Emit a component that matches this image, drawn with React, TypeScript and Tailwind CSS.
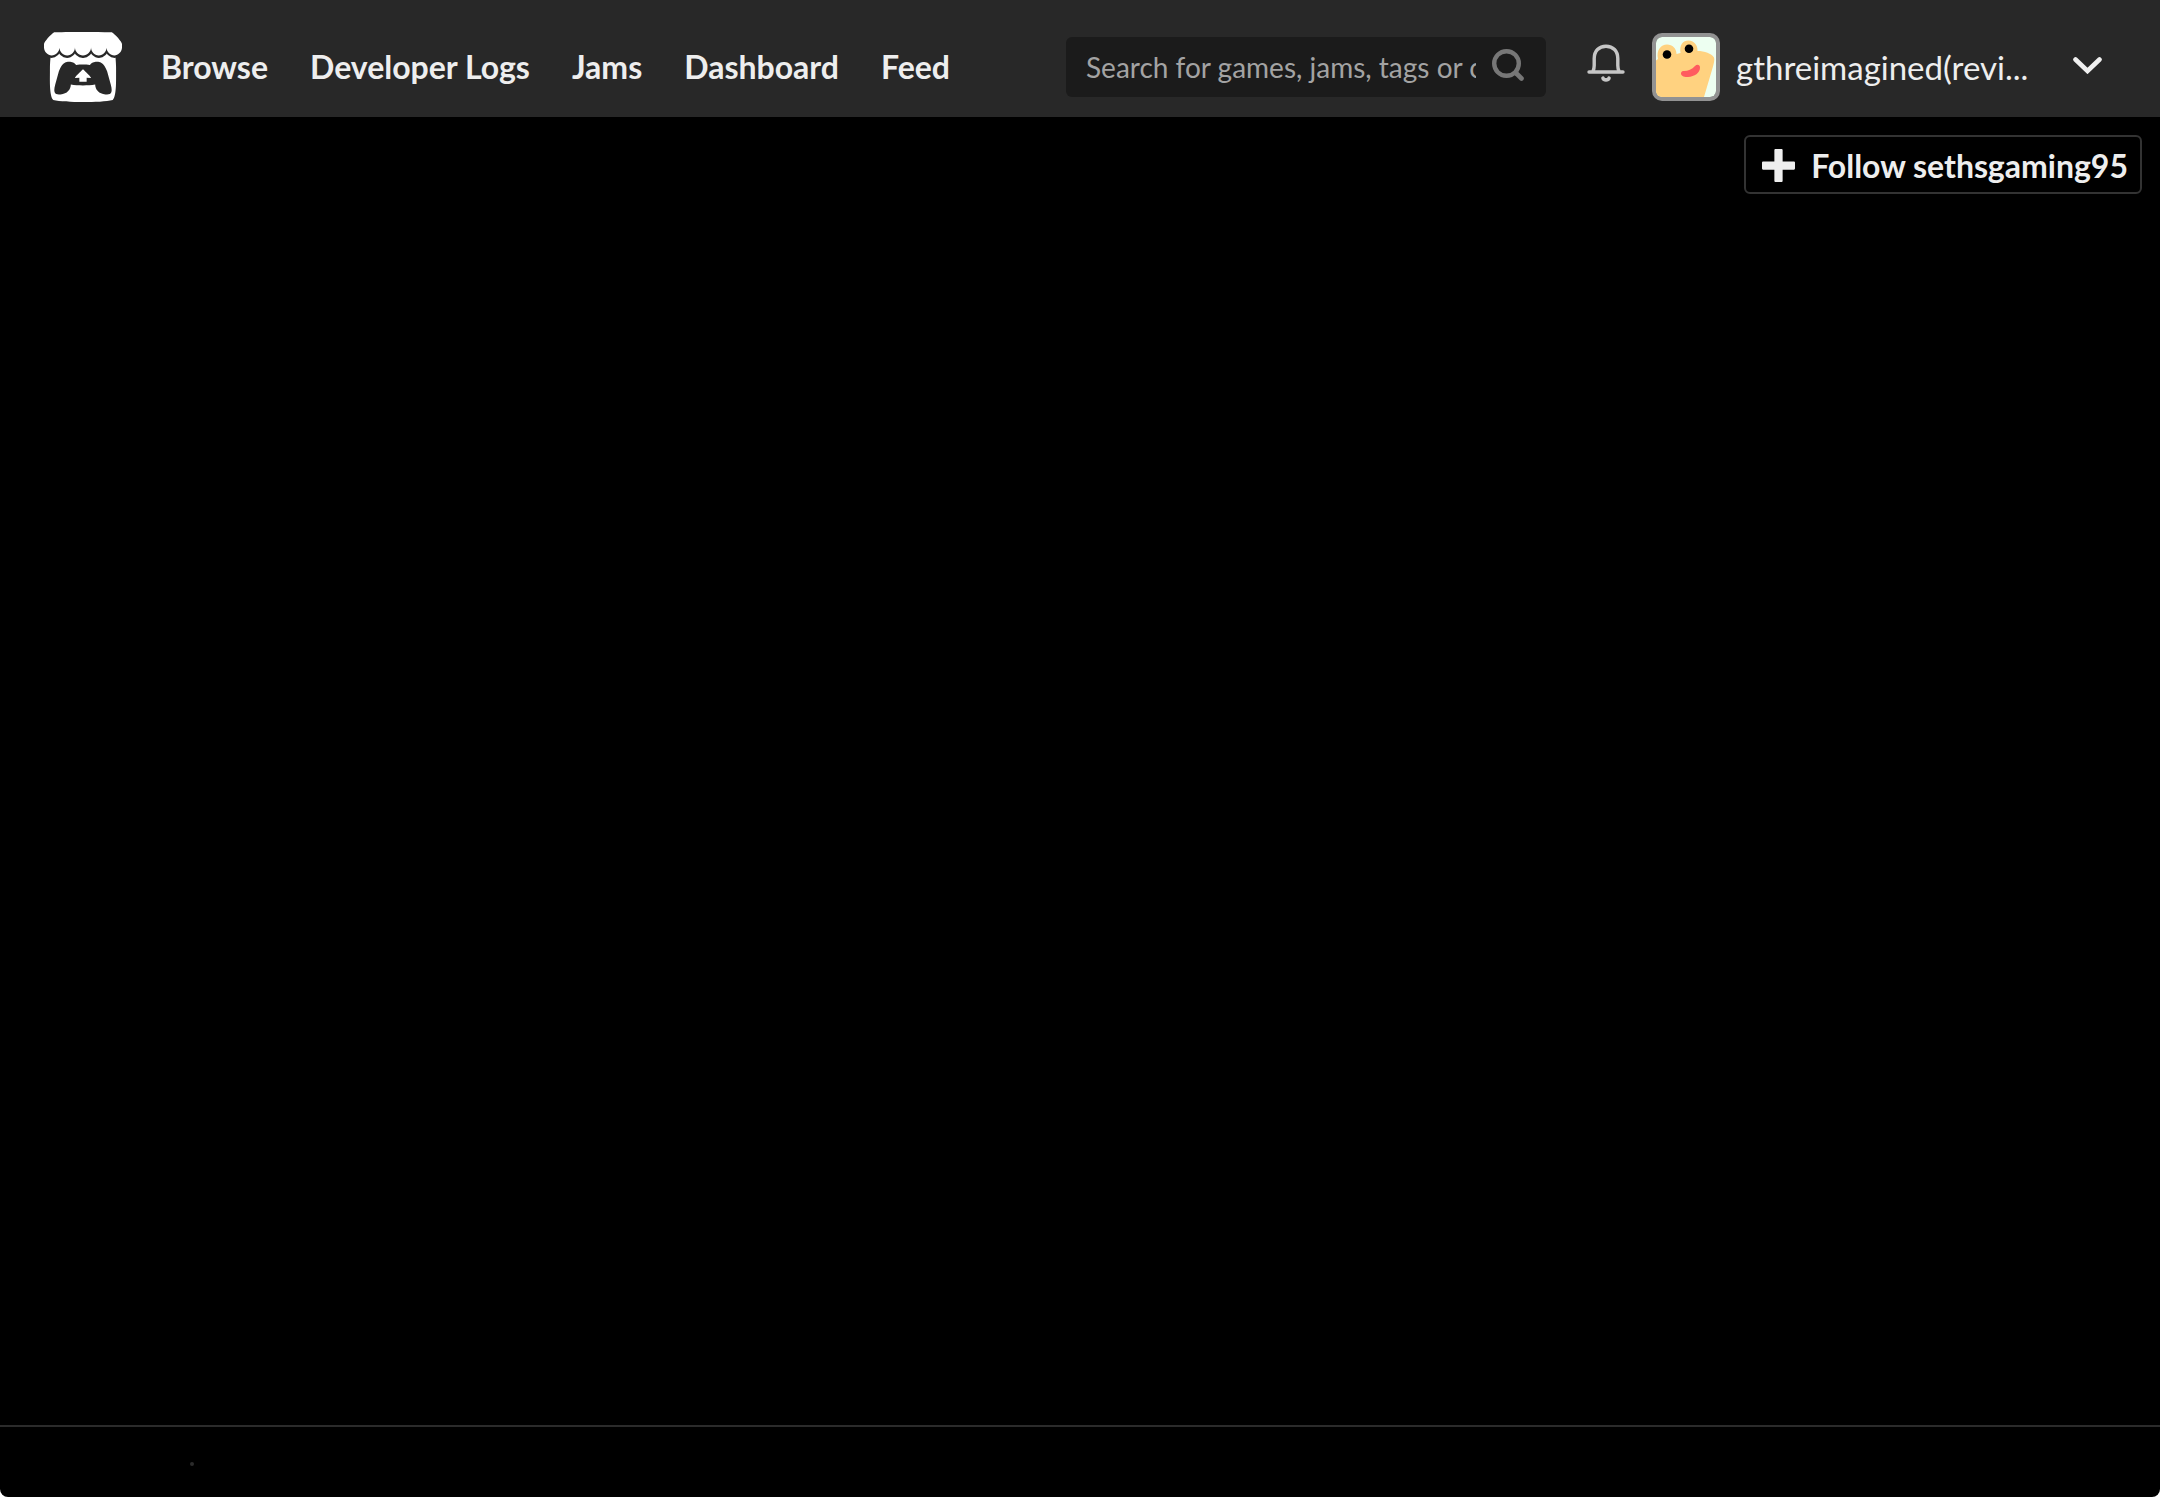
import { SiItchdotio } from "react-icons/si";

const links = ["Browse", "Developer Logs", "Jams", "Dashboard", "Feed"];

const SearchIcon = () => (
  <svg width="32" height="32" viewBox="0 0 32 32" fill="none" stroke="#777777">
    <circle cx="14.5" cy="14.5" r="12.3" strokeWidth="4.4" />
    <path d="M24.5 24.5l5 5" strokeWidth="4.6" strokeLinecap="round" />
  </svg>
);

const BellIcon = () => (
  <svg width="38" height="38" viewBox="0 0 38 38" fill="none" stroke="#c6c6c6">
    <path
      d="M2 28h34M6 27.500c1-2.500 1.200-4 1.200-6v-7C7.200 7 12 2.200 19 2.200S30.800 7 30.800 14.500v7c0 2 .2 3.500 1.200 6"
      strokeWidth="3.400"
      strokeLinecap="round"
      strokeLinejoin="round"
    />
    <path d="M16 34.200c1 2.200 5 2.200 6 0" strokeWidth="3.600" strokeLinecap="round" />
  </svg>
);

const Avatar = () => (
  <svg viewBox="0 0 60 60" className="size-full" aria-hidden="true">
    <rect width="60" height="60" fill="#edfff1" />
    <path
      d="M0 23.500L2 22C0 13 5 7.500 11 7.500c5.500 0 9.500 4 9.500 9.500l4-1C23 8 27 3.500 32.500 3.500c5 0 9.500 4.500 9 10.500 7 0 14 2.500 16.500 6.500.8 2 0 5-1 9L48 60H0z"
      fill="#ffd280"
    />
    <circle cx="11" cy="17.500" r="4.300" fill="#000" />
    <circle cx="33" cy="11.700" r="4.300" fill="#000" />
    <path
      d="M28 34c4 0 8-1.500 11-5 2-2 5-1.500 5 1.500 0 5.500-5.500 9-12 9.500-4 .3-7-1-7-3.500 0-2 1.500-2.500 3-2.500z"
      fill="#ff5c5f"
    />
  </svg>
);

const Header = () => {
  return (
    <header className="flex h-[117px] items-center bg-[#282828] pl-11 pr-[58px] pt-[17px]">
      <a href="#" aria-label="itch.io" className="mr-[18px]">
        <SiItchdotio size={78} className="text-white" />
      </a>
      <nav className="flex">
        {links.map((link) => (
          <a key={link} href="#" className="px-[21px] text-[32px] leading-10 font-bold whitespace-nowrap">
            {link}
          </a>
        ))}
      </nav>
      <form className="ml-auto flex h-[60px] w-[480px] items-center rounded-md bg-[#1b1b1b] pl-5">
        <input
          type="text"
          aria-label="Search"
          placeholder="Search for games, jams, tags or creators"
          className="h-full w-[390px] bg-transparent text-[28px] outline-none placeholder:text-[#a3a3a3]"
        />
        <button type="button" aria-label="Submit search" className="ml-4 pb-1">
          <SearchIcon />
        </button>
      </form>
      <button type="button" aria-label="Notifications" className="ml-[41px] pb-2">
        <BellIcon />
      </button>
      <a href="#" className="ml-[27px] flex items-center">
        <span className="size-[68px] overflow-hidden rounded-[10px] border-4 border-[#929292]">
          <Avatar />
        </span>
        <span className="ml-4 w-72 text-[33px] leading-10 whitespace-nowrap">gthreimagined(revi...</span>
      </a>
      <button type="button" aria-label="Account menu" className="ml-[49px] pb-1">
        <svg width="29" height="17" viewBox="0 0 29 17" fill="none" stroke="#f0f0f0">
          <path d="M2.500 2.500l12 11.500 12-11.500" strokeWidth="4.600" strokeLinecap="round" />
        </svg>
      </button>
    </header>
  );
};

export default function App() {
  return (
    <div className="bg-white">
      <div className="flex min-h-screen flex-col overflow-hidden rounded-b-lg bg-black font-[Lato,sans-serif] text-[#eeeeee]">
        <Header />
        <main className="flex grow items-start justify-end px-[18px] py-[18px]">
          <button
            type="button"
            className="flex h-[59px] items-center rounded-md border-2 border-[#333333] pt-0.5 pl-4 pr-3 text-[32px] font-bold"
          >
            <svg width="33" height="33" viewBox="0 0 32 32" fill="currentColor" className="mr-4">
              <path d="M13 0h6q1 0 1 1v11h11q1 0 1 1v6q0 1-1 1H20v11q0 1-1 1h-6q-1 0-1-1V20H1q-1 0-1-1v-6q0-1 1-1h11V1q0-1 1-1z" />
            </svg>
            Follow sethsgaming95
          </button>
        </main>
        <footer className="h-[72px] border-t-2 border-[#2b2b2b] pt-[35px] pl-[190px]">
          <span className="block size-1 rounded-full bg-[#2b2b2b]" />
        </footer>
      </div>
    </div>
  );
}
